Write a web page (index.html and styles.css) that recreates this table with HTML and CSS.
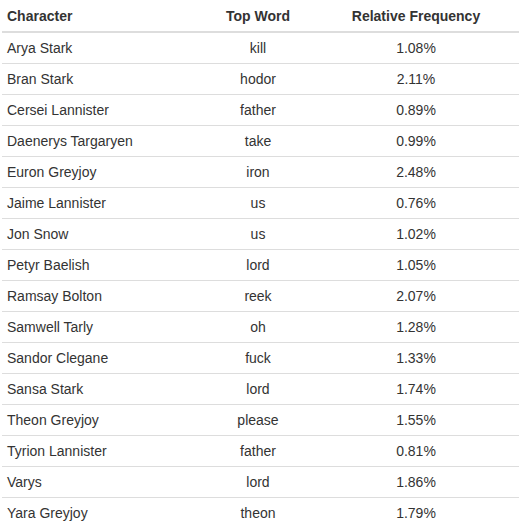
FILE: index.html
```html
<!DOCTYPE html>
<html>
<head>
<meta charset="utf-8">
<link rel="stylesheet" href="styles.css">
</head>
<body>
<table class="freq">
  <colgroup>
    <col class="c1"><col class="c2"><col class="c3">
  </colgroup>
  <thead>
    <tr><th class="left">Character</th><th>Top Word</th><th>Relative Frequency</th></tr>
  </thead>
  <tbody>
    <tr><td class="left">Arya Stark</td><td>kill</td><td>1.08%</td></tr>
    <tr><td class="left">Bran Stark</td><td>hodor</td><td>2.11%</td></tr>
    <tr><td class="left">Cersei Lannister</td><td>father</td><td>0.89%</td></tr>
    <tr><td class="left">Daenerys Targaryen</td><td>take</td><td>0.99%</td></tr>
    <tr><td class="left">Euron Greyjoy</td><td>iron</td><td>2.48%</td></tr>
    <tr><td class="left">Jaime Lannister</td><td>us</td><td>0.76%</td></tr>
    <tr><td class="left">Jon Snow</td><td>us</td><td>1.02%</td></tr>
    <tr><td class="left">Petyr Baelish</td><td>lord</td><td>1.05%</td></tr>
    <tr><td class="left">Ramsay Bolton</td><td>reek</td><td>2.07%</td></tr>
    <tr><td class="left">Samwell Tarly</td><td>oh</td><td>1.28%</td></tr>
    <tr><td class="left">Sandor Clegane</td><td>fuck</td><td>1.33%</td></tr>
    <tr><td class="left">Sansa Stark</td><td>lord</td><td>1.74%</td></tr>
    <tr><td class="left">Theon Greyjoy</td><td>please</td><td>1.55%</td></tr>
    <tr><td class="left">Tyrion Lannister</td><td>father</td><td>0.81%</td></tr>
    <tr><td class="left">Varys</td><td>lord</td><td>1.86%</td></tr>
    <tr><td class="left">Yara Greyjoy</td><td>theon</td><td>1.79%</td></tr>
  </tbody>
</table>
</body>
</html>
```
FILE: styles.css
```css
html, body {
  margin: 0;
  padding: 0;
  background: #fff;
}
body {
  font-family: "Liberation Sans", Arial, sans-serif;
  font-size: 14px;
  line-height: 20px;
  color: #333;
}
.freq {
  margin: 1px 0 0 2px;
  width: 517px;
  border-collapse: collapse;
  border-spacing: 0;
  table-layout: fixed;
}
.c1 { width: 201px; }
.c2 { width: 110px; }
.c3 { width: 206px; }
.freq th,
.freq td {
  padding: 5px;
  text-align: center;
  vertical-align: top;
}
.freq th {
  font-weight: bold;
  border-bottom: 2px solid #ddd;
}
.freq td {
  border-top: 1px solid #ddd;
}
.freq .left {
  text-align: left;
}
```
